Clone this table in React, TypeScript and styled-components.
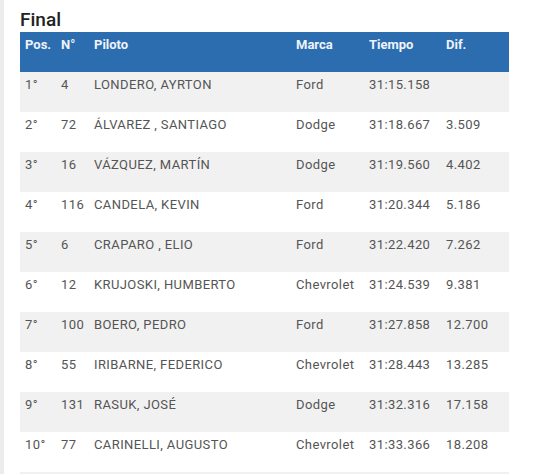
import React from "react";
import styled, { createGlobalStyle } from "styled-components";

const Global = createGlobalStyle`
  html, body { margin: 0; padding: 0; background: #fff; }
  body { font-family: Roboto, "Noto Sans", Arial, sans-serif; }
`;

const Page = styled.div`
  width: 535px;
  height: 474px;
  box-sizing: border-box;
  border-left: 4px solid #ececec;
  padding-left: 16px;
  overflow: hidden;
`;

const Title = styled.h2`
  margin: 0;
  padding-top: 7px;
  height: 25px;
  font-size: 19px;
  line-height: 25px;
  font-weight: 500;
  color: #222;
`;

const Table = styled.div`
  width: 489px;
  display: flex;
  flex-direction: column;
`;

const Row = styled.div<{ $head?: boolean; $shade?: boolean }>`
  display: grid;
  grid-template-columns: 36px 33px 202px 73px 77px 1fr;
  height: 40px;
  background: ${(p) => (p.$head ? "#2c6db0" : p.$shade ? "#f1f1f1" : "#fff")};
  color: ${(p) => (p.$head ? "#eef3f9" : "#555")};
  font-weight: ${(p) => (p.$head ? 700 : 400)};
  font-size: 13px;
  letter-spacing: ${(p) => (p.$head ? "0" : "0.4px")};
`;

const Cell = styled.div`
  padding: 5px 0 0 5px;
  line-height: 15px;
  white-space: nowrap;
`;

const rows = [
  ["1°", "4", "LONDERO, AYRTON", "Ford", "31:15.158", ""],
  ["2°", "72", "ÁLVAREZ , SANTIAGO", "Dodge", "31:18.667", "3.509"],
  ["3°", "16", "VÁZQUEZ, MARTÍN", "Dodge", "31:19.560", "4.402"],
  ["4°", "116", "CANDELA, KEVIN", "Ford", "31:20.344", "5.186"],
  ["5°", "6", "CRAPARO , ELIO", "Ford", "31:22.420", "7.262"],
  ["6°", "12", "KRUJOSKI, HUMBERTO", "Chevrolet", "31:24.539", "9.381"],
  ["7°", "100", "BOERO, PEDRO", "Ford", "31:27.858", "12.700"],
  ["8°", "55", "IRIBARNE, FEDERICO", "Chevrolet", "31:28.443", "13.285"],
  ["9°", "131", "RASUK, JOSÉ", "Dodge", "31:32.316", "17.158"],
  ["10°", "77", "CARINELLI, AUGUSTO", "Chevrolet", "31:33.366", "18.208"],
  ["", "", "", "", "", ""],
];

export default function App() {
  return (
    <Page>
      <Global />
      <Title>Final</Title>
      <Table>
        <Row $head>
          {["Pos.", "N°", "Piloto", "Marca", "Tiempo", "Dif."].map((h) => (
            <Cell key={h}>{h}</Cell>
          ))}
        </Row>
        {rows.map((r, i) => (
          <Row key={i} $shade={i % 2 === 0}>
            {r.map((c, j) => (
              <Cell key={j}>{c}</Cell>
            ))}
          </Row>
        ))}
      </Table>
    </Page>
  );
}
